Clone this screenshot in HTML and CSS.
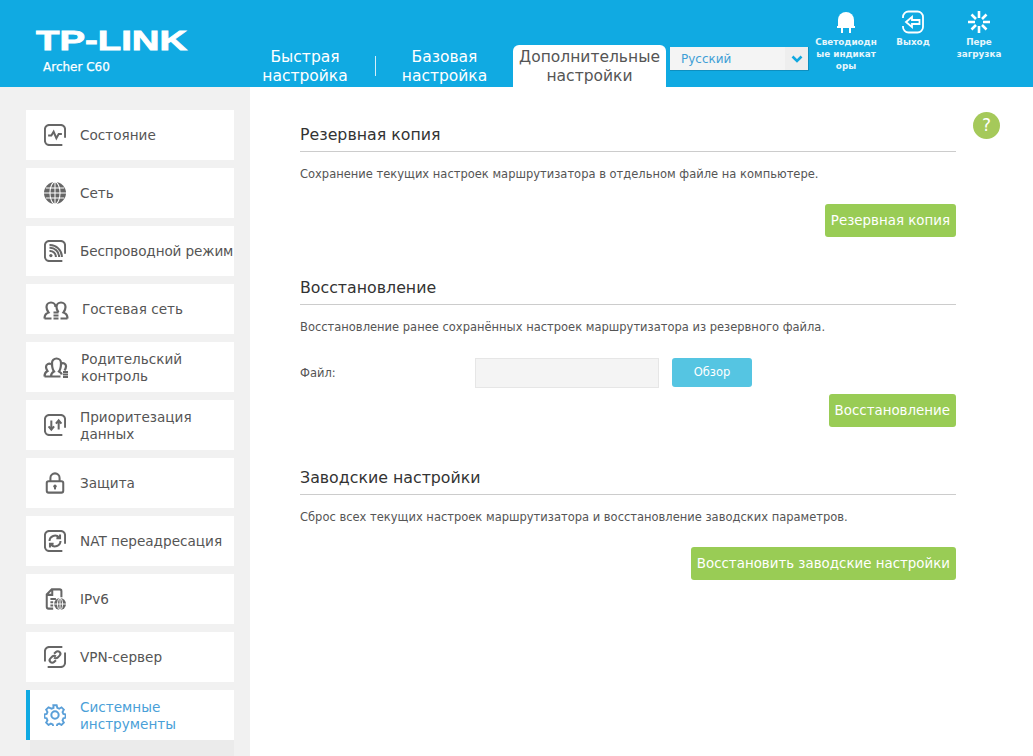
FILE: index.html
```html
<!DOCTYPE html>
<html lang="ru">

<head>
  <meta charset="UTF-8">
  <title>Archer C60</title>
  <link rel="stylesheet" href="styles.css">
</head>

<body>
  <header class="top">
    <div class="brand">
      <div class="logo">TP-LINK</div>
      <div class="model">Archer C60</div>
    </div>
    <nav class="tabs">
      <a class="tab tab-quick">Быстрая настройка</a>
      <span class="tab-sep"></span>
      <a class="tab tab-basic">Базовая настройка</a>
      <a class="tab tab-adv">Дополнительные настройки</a>
    </nav>
    <div class="lang">
      <span class="lang-text">Русский</span>
      <span class="lang-arrow">
        <svg width="12" height="8" viewBox="0 0 12 8"><path d="M1.5 1.5 6 6l4.500-4.500" fill="none" stroke="#10a8e0" stroke-width="2.600"/></svg>
      </span>
    </div>
    <div class="tools">
      <a class="tool tool-led">
        <svg width="24" height="24" viewBox="0 0 24 24"><path d="M4 16V10a8 8 0 0 1 16 0v6z" fill="#fff"/><path d="M3 16h18v2H3zM7 18h2v5H7zM15 18h2v5h-2z" fill="#fff"/></svg>
        <span>Светодиодн ые индикат оры</span>
      </a>
      <a class="tool tool-exit">
        <svg width="24" height="24" viewBox="0 0 24 24" fill="none" stroke="#fff" stroke-width="1.800"><path d="M2 8V7a5.500 5.500 0 0 1 5.500-5.500h9A5.500 5.500 0 0 1 22 7v10a5.500 5.500 0 0 1-5.500 5.500h-9A5.500 5.500 0 0 1 2 17v-1"/><path d="M5 12l6-5v3h7.500v4H11v3z"/></svg>
        <span>Выход</span>
      </a>
      <a class="tool tool-reboot">
        <svg width="24" height="24" viewBox="0 0 24 24" stroke="#fff" stroke-width="2.600"><path d="M12 1v7M12 16v7M1 12h7M16 12h7M4.500 4.500l4.500 4.500M15 15l4.500 4.500M19.500 4.500 15 9M9 15l-4.500 4.500"/></svg>
        <span>Пере загрузка</span>
      </a>
    </div>
  </header>

  <div class="page">
    <aside class="side">
      <a class="item">
        <svg class="ico" viewBox="0 0 24 24"><path d="M23 15V6a5 5 0 0 0-5-5H6a5 5 0 0 0-5 5v12a5 5 0 0 0 5 5h14"/><path d="M4.500 12.500H8l2.500-4 3 7 2.500-4.500h3.500"/></svg>
        <span>Состояние</span>
      </a>
      <a class="item">
        <svg class="ico" viewBox="0 0 24 24"><circle cx="12" cy="12" r="12" fill="#666" stroke="none"/><g stroke="#fff" stroke-width="1.100"><ellipse cx="12" cy="12" rx="5.500" ry="12"/><path d="M12 0v24M0 12h24M2 6.500h20M2 17.500h20"/></g></svg>
        <span>Сеть</span>
      </a>
      <a class="item item-long">
        <svg class="ico" viewBox="0 0 24 24"><path d="M23 15V6a5 5 0 0 0-5-5H6a5 5 0 0 0-5 5v12a5 5 0 0 0 5 5h14"/><circle cx="7.500" cy="17" r="1.800" fill="#666" stroke="none"/><path d="M6 12a6.500 6.500 0 0 1 7 6.500M6 8.500a10 10 0 0 1 10.500 10M6 5.500a13 13 0 0 1 13.500 13"/></svg>
        <span>Беспроводной режим</span>
      </a>
      <a class="item item-guest">
        <svg class="ico ico-wide" viewBox="0 0 26 22"><path d="M1.500 20.500c0-3 1-5 4-6-1.500-2-2-3-2-5.500a4.500 4.500 0 0 1 9 0M24.500 20.500c0-3-1-5-4-6 1.500-2 2-3 2-5.500a4.500 4.500 0 0 0-9 0c0 2.500.5 3.500 2 5.500M1.500 20.500h7M17.500 20.500h7M10.500 14.500h5M10.500 17.500h5M10.500 20.500h5"/></svg>
        <span>Гостевая сеть</span>
      </a>
      <a class="item item-two">
        <svg class="ico ico-wide" viewBox="0 0 26 22"><path d="M1.500 20.500c0-3 1-4.500 3-5.500-1-1.500-1.500-2.500-1.500-4a3.200 3.200 0 0 1 5-2.700M8 20.500c0-2.500 1-4 3-5-1.500-2-2-4.500-2-8.500a4.500 4.500 0 0 1 9 0c0 4-.5 6.500-2 8.500 1.500.8 2.500 1.800 2.800 3M18 8a3 3 0 0 1 5 2.500c0 1.500-.5 2.500-1.500 4M1.500 20.500h16M20 16h5M20 18.500h5M20 21h5"/></svg>
        <span>Родительский контроль</span>
      </a>
      <a class="item item-two">
        <svg class="ico" viewBox="0 0 24 24"><path d="M23 15V6a5 5 0 0 0-5-5H6a5 5 0 0 0-5 5v12a5 5 0 0 0 5 5h14"/><path d="M8 7v10M5 13.500 8 17l3-3.500M16 17V7M13 10.500 16 7l3 3.500"/></svg>
        <span>Приоритезация данных</span>
      </a>
      <a class="item">
        <svg class="ico" viewBox="0 0 24 24"><path d="M7 10V6.500a5 5 0 0 1 10 0V10"/><rect x="3" y="10" width="18" height="12.500" rx="2"/><circle cx="12" cy="15.500" r="1.800" fill="#666" stroke="none"/><path d="M12 16v3"/></svg>
        <span>Защита</span>
      </a>
      <a class="item">
        <svg class="ico" viewBox="0 0 24 24"><path d="M23 15V6a5 5 0 0 0-5-5H6a5 5 0 0 0-5 5v12a5 5 0 0 0 5 5h14"/><path d="M6 12a6 6 0 0 1 10.500-3.800M18 12a6 6 0 0 1-10.500 3.800M17.500 5v4h-4M6.500 19v-4h4"/></svg>
        <span>NAT переадресация</span>
      </a>
      <a class="item">
        <svg class="ico" viewBox="0 0 24 24"><path d="M10 22.500H5a2 2 0 0 1-2-2V7l5.500-5.500H17a2 2 0 0 1 2 2V10M3 7.500h6V2M7 12h6M7 15.500h3M7 19h3"/><circle cx="17.500" cy="17.500" r="6.500" fill="#666" stroke="none"/><g stroke="#fff" stroke-width="1"><ellipse cx="17.500" cy="17.500" rx="2.800" ry="6.500"/><path d="M11 17.500h13M17.500 11v13"/></g></svg>
        <span>IPv6</span>
      </a>
      <a class="item">
        <svg class="ico" viewBox="0 0 24 24"><path d="M1 17V6a5 5 0 0 1 5-5h14M23 7v11a5 5 0 0 1-5 5H4"/><path d="M11 8.500l2-2a2.800 2.800 0 0 1 4 4l-2 2a2.800 2.800 0 0 1-4 0M13 15.500l-2 2a2.800 2.800 0 0 1-4-4l2-2a2.800 2.800 0 0 1 4 0"/></svg>
        <span>VPN-сервер</span>
      </a>
      <a class="item item-two item-active">
        <svg class="ico" viewBox="0 0 24 24"><circle cx="12" cy="12" r="4"/><path d="M10 1.500h4l.7 3 2.300 1 2.700-1.600 2.800 2.800-1.600 2.700 1 2.300 2.600.6v4l-2.600.7-1 2.300 1.600 2.700-2.800 2.800-2.700-1.600-2.300 1-.7 2.800h-4l-.7-2.800-2.300-1-2.700 1.600-2.800-2.800 1.600-2.700-1-2.300-2.600-.7v-4l2.600-.6 1-2.300-1.600-2.700 2.800-2.800L8 5.500l2.300-1z" transform="translate(12 12) scale(.92) translate(-12 -13)"/></svg>
        <span>Системные инструменты</span>
      </a>
      <div class="subnav"></div>
    </aside>

    <main class="main">
      <a class="help">?</a>

      <section class="block">
        <h2>Резервная копия</h2>
        <p>Сохранение текущих настроек маршрутизатора в отдельном файле на компьютере.</p>
        <div class="actions"><button class="btn">Резервная копия</button></div>
      </section>

      <section class="block block-restore">
        <h2>Восстановление</h2>
        <p>Восстановление ранее сохранённых настроек маршрутизатора из резервного файла.</p>
        <div class="file-row">
          <label>Файл:</label>
          <div class="file-input"></div>
          <button class="browse">Обзор</button>
        </div>
        <div class="actions actions-tight"><button class="btn">Восстановление</button></div>
      </section>

      <section class="block block-factory">
        <h2>Заводские настройки</h2>
        <p>Сброс всех текущих настроек маршрутизатора и восстановление заводских параметров.</p>
        <div class="actions"><button class="btn">Восстановить заводские настройки</button></div>
      </section>
    </main>
  </div>
</body>

</html>
```

FILE: styles.css
```css
html,
body {
  margin: 0;
  padding: 0;
  height: 100%;
  overflow: hidden;
  background: #fff;
  font-family: "DejaVu Sans", Verdana, sans-serif;
  color: #555;
}

.top {
  height: 87px;
  background: #10aae2;
  display: flex;
  color: #fff;
}

.brand {
  width: 214px;
  padding: 27px 0 0 36px;
  flex: none;
}

.logo {
  font-family: "Liberation Sans", sans-serif;
  font-weight: bold;
  font-size: 27px;
  line-height: 28px;
  width: 104px;
  white-space: nowrap;
  transform: scaleX(1.42);
  transform-origin: left top;
  -webkit-text-stroke: 0.8px #fff;
}

.model {
  font-size: 12px;
  line-height: 16px;
  margin: 4px 0 0 7px;
  -webkit-text-stroke: 0.25px #fff;
}

.tabs {
  display: flex;
  align-items: flex-end;
  height: 87px;
  flex: none;
}

.tab {
  font-size: 15.500px;
  line-height: 19px;
  text-align: center;
  height: 42px;
  box-sizing: border-box;
  padding-top: 3px;
}

.tab-quick {
  width: 110px;
  margin-right: 15px;
}

.tab-sep {
  width: 1px;
  height: 20px;
  background: #d4eef9;
  margin: 0 0 11px 0;
}

.tab-basic {
  width: 137px;
}

.tab-adv {
  width: 153px;
  background: #fff;
  color: #555;
  border-radius: 6px 6px 0 0;
}

.lang {
  width: 139px;
  height: 24px;
  margin: 47px 0 0 4px;
  background: #f4f4f4;
  flex: none;
  display: flex;
  align-items: center;
  justify-content: space-between;
  box-sizing: border-box;
  border-bottom: 1px solid #0e8fbf;
  border-right: 1px solid #0e8fbf;
}

.lang-text {
  font-size: 12px;
  color: #3f9fd6;
  padding-left: 11px;
}

.lang-arrow {
  width: 23px;
  height: 23px;
  background: #eee;
  display: flex;
  align-items: center;
  justify-content: center;
}

.tools {
  display: flex;
  flex: none;
  margin-left: 6px;
  padding-top: 10px;
}

.tool {
  display: flex;
  flex-direction: column;
  align-items: center;
  text-align: center;
  font-size: 8.800px;
  font-weight: bold;
  line-height: 12px;
  color: #e6f6fc;
}

.tool svg {
  margin-bottom: 2px;
  flex: none;
}

.tool-led {
  width: 62px;
}

.tool-exit {
  width: 60px;
  margin-left: 6px;
}

.tool-reboot {
  width: 50px;
  margin-left: 11px;
}

.page {
  display: flex;
  height: 669px;
}

.side {
  width: 250px;
  flex: none;
  background: #f1f1f1;
  box-sizing: border-box;
  padding: 23px 16px 0 26px;
  overflow: hidden;
}

.item {
  display: flex;
  align-items: center;
  height: 50px;
  margin-bottom: 8px;
  background: #fff;
  padding-left: 18px;
  box-sizing: border-box;
  font-size: 13.600px;
  line-height: 17px;
  color: #555;
}

.item span {
  width: 154px;
  flex: none;
}

.item-long span {
  white-space: nowrap;
  letter-spacing: -0.12px;
}

.item-guest span {
  margin-left: 1px;
}

.item-two span {
  margin-top: 2px;
}

.ico {
  width: 22px;
  height: 22px;
  margin-right: 14px;
  flex: none;
  fill: none;
  stroke: #666;
  stroke-width: 2.200;
}

.ico-wide {
  width: 26px;
  margin: 0 12px 0 -1px;
}

.item-active {
  border-left: 4px solid #10aae2;
  padding-left: 14px;
  color: #4a9fd8;
  margin-bottom: 0;
}

.item-active .ico {
  stroke: #5a9fd8;
}

.subnav {
  height: 40px;
  margin-left: 4px;
  background: #ebebeb;
}

.main {
  position: relative;
  flex: 1;
  padding: 23px 77px 0 50px;
}

.help {
  position: absolute;
  top: 25px;
  left: 723px;
  width: 27px;
  height: 27px;
  line-height: 27px;
  border-radius: 50%;
  background: #a5c95a;
  color: #fff;
  text-align: center;
  font-size: 17px;
}

.block h2 {
  margin: 15px 0 0;
  font-size: 15.800px;
  font-weight: normal;
  line-height: 20px;
  padding-bottom: 6px;
  border-bottom: 1px solid #ccc;
  color: #333;
}

.block p {
  margin: 15px 0 0;
  font-size: 11.500px;
  line-height: 15px;
  color: #555;
}

.actions {
  display: flex;
  justify-content: flex-end;
  margin-top: 22px;
}

.actions-tight {
  margin-top: 6px;
}

.btn {
  height: 33px;
  padding: 0 6px;
  border: 0;
  border-radius: 3px;
  background: #99cc55;
  color: #fff;
  font-family: inherit;
  font-size: 13.400px;
}

.block-restore {
  margin-top: 41px;
}

.block-factory {
  margin-top: 41px;
}

.file-row {
  display: flex;
  align-items: flex-start;
  margin-top: 23px;
}

.file-row label {
  width: 175px;
  font-size: 11.500px;
  line-height: 30px;
}

.file-input {
  width: 184px;
  height: 30px;
  box-sizing: border-box;
  background: #f4f4f4;
  border: 1px solid #e6e6e6;
}

.browse {
  width: 80px;
  height: 29px;
  margin-left: 13px;
  padding-bottom: 3px;
  border: 0;
  border-radius: 3px;
  background: #55c5e2;
  color: #fff;
  font-family: inherit;
  font-size: 11.500px;
}
```
